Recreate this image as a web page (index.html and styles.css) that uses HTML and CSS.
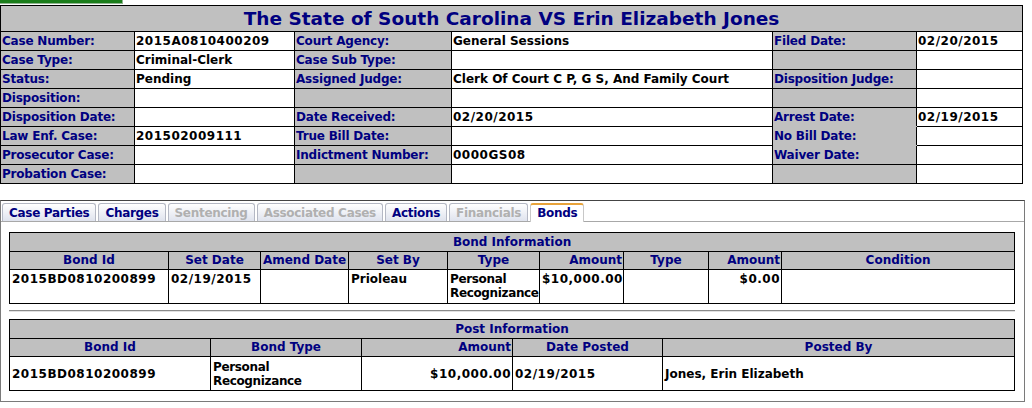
FILE: index.html
```html
<!DOCTYPE html>
<html>
<head>
<meta charset="utf-8">
<link rel="stylesheet" href="styles.css">
</head>
<body>
<div class="topbar"></div>
<table class="case">
  <colgroup><col class="c1"><col class="c2"><col class="c3"><col class="c4"><col class="c5"><col class="c6"></colgroup>
  <tr><th class="title" colspan="6">The State of South Carolina VS Erin Elizabeth Jones</th></tr>
  <tr><td class="lbl">Case Number:</td><td class="num">2015A0810400209</td><td class="lbl">Court Agency:</td><td>General Sessions</td><td class="lbl">Filed Date:</td><td class="num">02/20/2015</td></tr>
  <tr><td class="lbl">Case Type:</td><td>Criminal-Clerk</td><td class="lbl">Case Sub Type:</td><td></td><td class="lbl"></td><td></td></tr>
  <tr><td class="lbl">Status:</td><td>Pending</td><td class="lbl">Assigned Judge:</td><td>Clerk Of Court C P, G S, And Family Court</td><td class="lbl">Disposition Judge:</td><td></td></tr>
  <tr><td class="lbl">Disposition:</td><td></td><td class="lbl"></td><td></td><td class="lbl"></td><td></td></tr>
  <tr><td class="lbl">Disposition Date:</td><td></td><td class="lbl">Date Received:</td><td class="num">02/20/2015</td><td class="lbl nob">Arrest Date:</td><td class="num">02/19/2015</td></tr>
  <tr><td class="lbl">Law Enf. Case:</td><td class="num">201502009111</td><td class="lbl">True Bill Date:</td><td></td><td class="lbl nob">No Bill Date:</td><td></td></tr>
  <tr><td class="lbl">Prosecutor Case:</td><td></td><td class="lbl">Indictment Number:</td><td class="num">0000GS08</td><td class="lbl">Waiver Date:</td><td></td></tr>
  <tr><td class="lbl">Probation Case:</td><td></td><td class="lbl"></td><td></td><td class="lbl"></td><td></td></tr>
</table>

<div class="tabs">
  <ul class="tabnav">
    <li class="tab">Case Parties</li>
    <li class="tab">Charges</li>
    <li class="tab off">Sentencing</li>
    <li class="tab off">Associated Cases</li>
    <li class="tab">Actions</li>
    <li class="tab off">Financials</li>
    <li class="tab active">Bonds</li>
  </ul>
  <div class="panel">
    <table class="grid bonds">
      <colgroup><col class="b1"><col class="b2"><col class="b3"><col class="b4"><col class="b5"><col class="b6"><col class="b7"><col class="b8"><col class="b9"></colgroup>
      <tr class="cap"><th colspan="9">Bond Information</th></tr>
      <tr class="hdr"><th>Bond Id</th><th>Set Date</th><th>Amend Date</th><th>Set By</th><th>Type</th><th class="r">Amount</th><th>Type</th><th class="r">Amount</th><th>Condition</th></tr>
      <tr class="data"><td class="num">2015BD0810200899</td><td class="num">02/19/2015</td><td></td><td>Prioleau</td><td class="tight">Personal Recognizance</td><td class="r num">$10,000.00</td><td></td><td class="r num">$0.00</td><td></td></tr>
    </table>
    <div class="rule"></div>
    <table class="grid posts">
      <colgroup><col class="p1"><col class="p2"><col class="p3"><col class="p4"><col class="p5"></colgroup>
      <tr class="cap"><th colspan="5">Post Information</th></tr>
      <tr class="hdr"><th>Bond Id</th><th>Bond Type</th><th class="r">Amount</th><th>Date Posted</th><th>Posted By</th></tr>
      <tr class="data mid"><td class="num">2015BD0810200899</td><td class="tight">Personal<br>Recognizance</td><td class="r num">$10,000.00</td><td class="num">02/19/2015</td><td>Jones, Erin Elizabeth</td></tr>
    </table>
  </div>
</div>
</body>
</html>
```
FILE: styles.css
```css
html, body {
  margin: 0;
  padding: 0;
  background: #fff;
}
body {
  font-family: "DejaVu Sans", Verdana, sans-serif;
  font-size: 12px;
  font-weight: bold;
  color: #000;
}
.topbar {
  width: 122px;
  height: 3px;
  background: #1b7d1b;
  border-right: 1px solid #8fb48f;
  border-bottom: 1px solid #8fb48f;
  margin-bottom: 1px;
}
table {
  border-collapse: collapse;
  table-layout: fixed;
}
.num {
  letter-spacing: 0.5px;
}
.tight {
  letter-spacing: -0.35px;
}
.case {
  width: 1023px;
}
.case .c1 { width: 134px; }
.case .c2 { width: 160px; }
.case .c3 { width: 157px; }
.case .c4 { width: 321px; }
.case .c5 { width: 144px; }
.case .c6 { width: 106px; }
.case td, .case th {
  border: 1px solid #000;
  padding: 2px 1px;
  height: 14px;
  line-height: 14px;
  white-space: nowrap;
  overflow: hidden;
  text-align: left;
  vertical-align: middle;
}
.case .lbl {
  background: #c0c0c0;
  color: #000080;
  letter-spacing: -0.2px;
}
.case .title {
  background: #c0c0c0;
  color: #000080;
  font-size: 18.5px;
  letter-spacing: 0;
  line-height: 23px;
  height: 23px;
  padding: 1px 0 1px;
  text-align: center;
}
.case .nob {
  border-bottom-color: #c0c0c0;
}

.tabs {
  margin-top: 16px;
  width: 1023px;
  border: 1px solid #7a7a7a;
  border-top-color: #444;
  padding: 2px 0 10px 0;
}
.tabnav {
  list-style: none;
  margin: 0;
  padding: 0 0 0 1px;
  display: flex;
  gap: 2px;
  border-bottom: 1px solid #a8a8a8;
}
.tab {
  padding: 2px 6px 1px 6px;
  line-height: 14px;
  color: #000080;
  letter-spacing: -0.3px;
  background: linear-gradient(#ffffff, #dfe3ee);
  border: 1px solid #b4b8c4;
  border-bottom: none;
  border-radius: 3px 3px 0 0;
  white-space: nowrap;
}
.tab.off {
  color: #b0b0b0;
}
.tab.active {
  background: #fff;
  border-color: #c8c8c8;
  border-top: 2px solid #e8a33a;
  padding-top: 1px;
  margin-bottom: -1px;
  padding-bottom: 2px;
}
.panel {
  padding: 10px 9px 0 8px;
}
.grid {
  width: 1006px;
}
.grid td, .grid th {
  border: 1px solid #000;
  line-height: 14px;
  overflow: hidden;
}
.grid th {
  background: #c0c0c0;
  color: #000080;
  text-align: center;
  white-space: nowrap;
  padding: 2px 1px;
  height: 14px;
}
.grid .hdr th {
  padding: 1px 1px 2px 1px;
}
.grid td {
  text-align: left;
  vertical-align: top;
  height: 30px;
  padding: 2px 2px 1px 2px;
}
.grid .mid td {
  vertical-align: middle;
}
.grid .r {
  text-align: right;
  padding-right: 1px;
}
.grid td.r {
  padding-right: 1px;
}
.bonds .b1 { width: 159px; }
.bonds .b2 { width: 92px; }
.bonds .b3 { width: 88px; }
.bonds .b4 { width: 99px; }
.bonds .b5 { width: 92px; }
.bonds .b6 { width: 84px; }
.bonds .b7 { width: 85px; }
.bonds .b8 { width: 73px; }
.bonds .b9 { width: 233px; }
.posts .p1 { width: 201px; }
.posts .p2 { width: 151px; }
.posts .p3 { width: 151px; }
.posts .p4 { width: 150px; }
.posts .p5 { width: 352px; }
.rule {
  width: 1006px;
  height: 0;
  border-top: 1px solid #8a8a8a;
  border-bottom: 1px solid #e0e0e0;
  margin: 6px 0 7px 0;
}
```
